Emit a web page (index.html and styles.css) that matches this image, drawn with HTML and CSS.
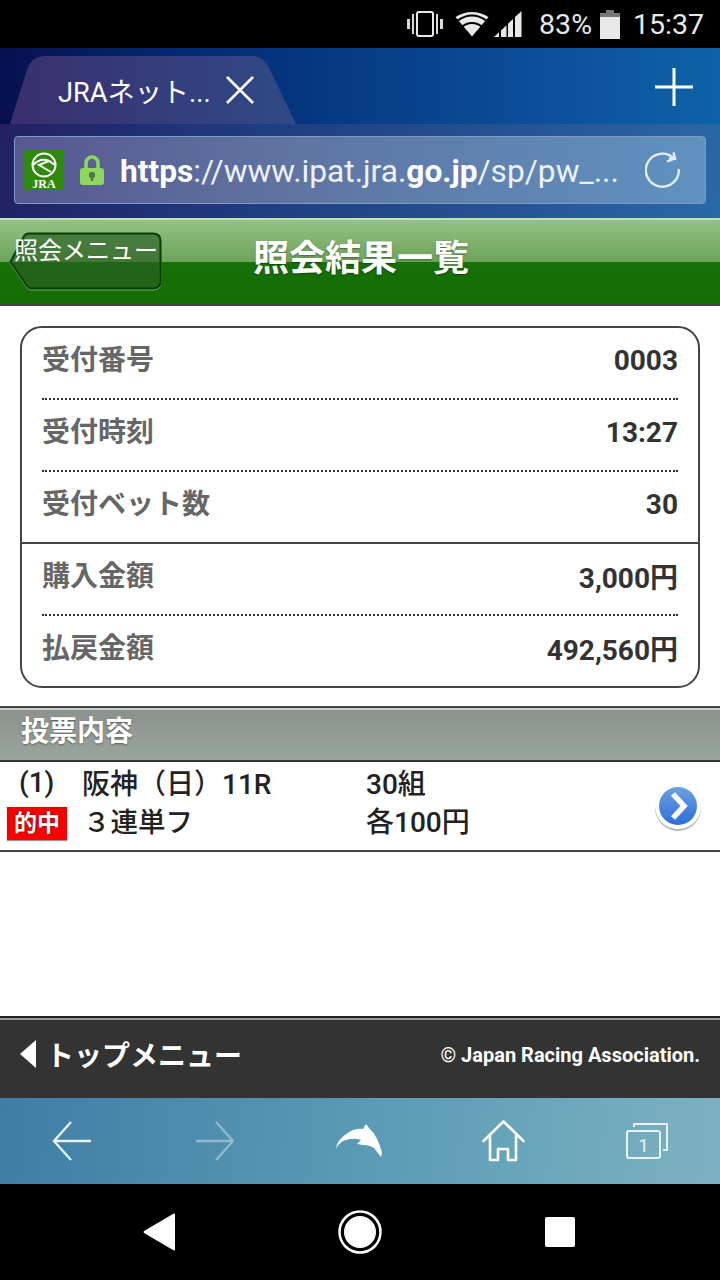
FILE: index.html
```html
<!DOCTYPE html>
<html lang="ja">
<head>
<meta charset="utf-8"/>
<title>照会結果一覧</title>
<link rel="stylesheet" href="styles.css">
</head>
<body>
<div class="phone">

<!-- status bar -->
<div class="status">
  <svg class="st-vib" width="36" height="26" viewBox="0 0 36 26" fill="#d8d8d8">
    <rect x="10" y="1" width="16" height="24" rx="2" fill="none" stroke="#e8e8e8" stroke-width="2"/>
    <path d="M5 3h2v20H5ZM0 8h3v10H0ZM29 3h2v20h-2ZM33 8h3v10h-3Z"/>
  </svg>
  <svg class="st-wifi" width="34" height="26" viewBox="0 0 34 26">
    <path d="M17 25.500 0.500 6Q17 -4 33.500 6Z" fill="#e8e8e8"/>
    <path d="M2 10Q17 -1 32 10M5 17Q17 7 29 17" fill="none" stroke="#000" stroke-width="2"/>
  </svg>
  <svg class="st-signal" width="28" height="26" viewBox="0 0 28 26">
    <path d="M0 26 5 21.300V26ZM7 26V19.400L12.500 14.200V26ZM14 26V12.800L19 8V26ZM21 26V6.100L27.500 0V26Z" fill="#e8e8e8"/>
  </svg>
  <span class="st-pct">83%</span>
  <svg class="st-batt" width="20" height="29" viewBox="0 0 20 29">
    <path d="M6 0h8v3h6v26H0V3h6Z" fill="#e8e8e8"/>
    <path d="M6 0h8v3h6v4H0V3h6Z" fill="#777"/>
  </svg>
  <span class="st-time">15:37</span>
</div>

<!-- browser chrome -->
<div class="chrome">
  <div class="tabs">
    <svg class="tab-shape" width="300" height="68" viewBox="0 0 300 68">
      <defs>
        <linearGradient id="tabg" x1="0" x2="1" y1="0" y2="0">
          <stop offset="0" stop-color="#3a2f6e"/>
          <stop offset="1" stop-color="#2f4a86"/>
        </linearGradient>
      </defs>
      <path d="M10 68 27 14Q31 0 46 0H252Q264 0 270 14L296 68Z" fill="url(#tabg)"/>
    </svg>
    <div class="tab">
      <span class="tab-title">JRAネット...</span>
      <svg width="30" height="30" viewBox="0 0 30 30" stroke="#fff" stroke-width="2.600" fill="none">
        <path d="M2 2 28 28M28 2 2 28"/>
      </svg>
    </div>
    <svg class="tab-add" width="40" height="40" viewBox="0 0 40 40" stroke="#fff" stroke-width="3" fill="none">
      <path d="M20 1V39M1 20H39"/>
    </svg>
  </div>
  <div class="addr-wrap">
    <div class="addr">
      <svg class="jra" width="40" height="40" viewBox="0 0 40 40">
        <rect width="40" height="40" fill="#2f8a0c"/>
        <circle cx="20" cy="15" r="11.500" fill="none" stroke="#fff" stroke-width="2"/>
        <path d="M9 15Q17 7 25 11L15 15 27 22M25 11 31 15" fill="none" stroke="#fff" stroke-width="2"/>
        <text x="20" y="37.500" font-family="Liberation Serif" font-size="12" font-weight="700" fill="#fff" text-anchor="middle">JRA</text>
      </svg>
      <svg class="lock" width="24" height="30" viewBox="0 0 24 30">
        <path d="M6 13V8a6 6 0 0 1 12 0V13" fill="none" stroke="#8ed860" stroke-width="3.600"/>
        <rect y="13" width="24" height="17" rx="3" fill="#8ed860"/>
        <circle cx="12" cy="20" r="3.200" fill="#4d7a4a"/>
        <rect x="10.800" y="21" width="2.400" height="5" fill="#4d7a4a"/>
      </svg>
      <span class="url"><b>https</b>://www.ipat.jra.<b>go.jp</b>/sp/pw_...</span>
      <svg class="reload" width="36" height="38" viewBox="0 0 36 38" fill="none" stroke="#e6edf5" stroke-width="2.400">
        <path d="M33.800 18A16.500 16.500 0 1 1 29 7.500H24"/>
        <path d="M28.500 1.500 30 7.500 22 10.500"/>
      </svg>
    </div>
  </div>
</div>

<!-- page header -->
<header class="head">
  <a class="back">
    <svg class="back-shape" width="154" height="60" viewBox="0 0 154 60">
      <path d="M20 1.500H144Q151.500 1.500 151.500 9V49Q151.500 56.500 144 56.500H22Q20 56.500 18 54L1.500 30 14 6Q16 1.500 20 1.500Z" fill="#003200" fill-opacity=".4" stroke="#0a3c06" stroke-width="2"/>
    </svg>
    <span>照会メニュー</span>
  </a>
  <h1>照会結果一覧</h1>
</header>

<!-- summary -->
<main class="content">
  <section class="card">
    <div class="row dot"><span>受付番号</span><strong>0003</strong></div>
    <div class="row dot"><span>受付時刻</span><strong>13:27</strong></div>
    <div class="row solid"><span>受付ベット数</span><strong>30</strong></div>
    <div class="row dot"><span>購入金額</span><strong>3,000円</strong></div>
    <div class="row last"><span>払戻金額</span><strong>492,560円</strong></div>
  </section>

  <h2 class="sec">投票内容</h2>
  <div class="vote">
    <div class="vote-left">
      <div class="vote-line">
        <span class="c-no">(1)</span>
        <span class="c-race">阪神（日）11R</span>
        <span class="c-num">30組</span>
      </div>
      <div class="vote-line">
        <span class="hit">的中</span>
        <span class="c-type">３連単フ</span>
        <span class="c-num">各100円</span>
      </div>
    </div>
    <svg class="go" width="48" height="50" viewBox="0 0 48 50">
      <defs>
        <linearGradient id="gog" x1="0" x2="0" y1="0" y2="1">
          <stop offset="0" stop-color="#6f9fdc"/>
          <stop offset="1" stop-color="#2a6fdc"/>
        </linearGradient>
      </defs>
      <ellipse cx="24" cy="26" rx="23" ry="23" fill="#bbb"/>
      <circle cx="24" cy="24" r="23" fill="#fff"/>
      <circle cx="24" cy="24" r="19" fill="url(#gog)"/>
      <path d="M19 12 30 24 19 36" fill="none" stroke="#fff" stroke-width="5.500"/>
    </svg>
  </div>
</main>

<!-- site footer -->
<footer class="foot">
  <a class="top"><i class="tri"></i>トップメニュー</a>
  <span class="copy">© Japan Racing Association.</span>
</footer>

<!-- browser toolbar -->
<nav class="tools">
  <svg width="40" height="40" viewBox="0 0 40 40" fill="none" stroke="#e6f2f6" stroke-width="2.400">
    <path d="M39 20H2M19 1 2 20 19 39"/>
  </svg>
  <svg class="t-fwd" width="40" height="40" viewBox="0 0 40 40" fill="none" stroke="#8fb9cc" stroke-width="2.400">
    <path d="M1 20H38M21 1 38 20 21 39"/>
  </svg>
  <svg class="t-dolphin" width="46" height="36" viewBox="0 0 46 36">
    <path d="M0 26Q1 15 17 7 23 5 27 6L30 1 33 5Q42 13 46 30L45 34 38 25Q34 22 27 22L21 21 25 17Q17 14 7 18 2 21 0 26Z" fill="#fff"/>
  </svg>
  <svg class="t-home" width="44" height="42" viewBox="0 0 44 42" fill="none" stroke="#fff" stroke-width="2.600" stroke-linejoin="round" stroke-linecap="round">
    <path d="M1.500 21 21.500 1.500 41.500 21M8 16V40H16V29H26V40H34V16"/>
  </svg>
  <svg class="t-tabs" width="42" height="36" viewBox="0 0 42 36" fill="none" stroke="#e6f2f6" stroke-width="2">
    <rect x="1" y="8" width="33" height="27" rx="2"/>
    <path d="M8 4V1H41V27H37"/>
    <text x="17.500" y="29" font-family="Roboto" font-size="19" fill="#e6f2f6" stroke="none" text-anchor="middle">1</text>
  </svg>
</nav>

<!-- android nav -->
<div class="android">
  <svg width="34" height="38" viewBox="0 0 34 38"><path d="M32 1.500V36.500Q32 38 30 37L1 20Q0 19 1 18L30 1Q32 0 32 1.500Z" fill="#fff"/></svg>
  <svg class="a-home" width="44" height="44" viewBox="0 0 44 44"><circle cx="22" cy="22" r="20.500" fill="none" stroke="#fff" stroke-width="2.500"/><circle cx="22" cy="22" r="16" fill="#fff"/></svg>
  <svg class="a-recent" width="30" height="30" viewBox="0 0 30 30"><rect width="30" height="30" rx="2" fill="#fff"/></svg>
</div>

</div>
</body>
</html>
```

FILE: styles.css
```css
body {
  margin: 0;
  background: #fff;
  font-family: Roboto, "Noto Sans CJK JP", sans-serif;
}
.phone {
  width: 720px;
  height: 1280px;
  display: flex;
  flex-direction: column;
  overflow: hidden;
}

/* status bar */
.status {
  height: 48px;
  background: #000;
  color: #e8e8e8;
  display: flex;
  align-items: center;
  justify-content: flex-end;
  padding-right: 16px;
  font-size: 28.500px;
}
.status svg { flex: none; }
.st-wifi { margin-left: 12px; }
.st-signal { margin-left: 5px; }
.st-pct { margin-left: 17px; }
.st-batt { margin-left: 8px; }
.st-time { margin-left: 13px; }

/* browser chrome */
.chrome {
  height: 170px;
  background: linear-gradient(100deg, #23205f 0%, #1f3a80 35%, #2b68a6 100%);
}
.tabs {
  height: 76px;
  position: relative;
  background: linear-gradient(90deg, #07104f 0%, #022a72 25%, #0b4f98 75%, #0f62a6 100%);
  display: flex;
  align-items: center;
  justify-content: space-between;
}
.tab-shape {
  position: absolute;
  left: 0;
  top: 8px;
}
.tab {
  position: relative;
  display: flex;
  align-items: center;
  gap: 14px;
  margin: 8px 0 0 58px;
  color: #fff;
  font-size: 27.200px;
}
.tab-add { margin: 1px 26px 0 0; }
.addr-wrap { padding: 12px 14px 0; }
.addr {
  height: 66px;
  border: 1px solid #7f9cc6;
  border-radius: 4px;
  background: linear-gradient(90deg, #56588f 0%, #5f74a3 40%, #5f92c0 100%);
  display: flex;
  align-items: center;
  padding-left: 9px;
}
.jra { flex: none; }
.lock { margin-left: 16px; flex: none; }
.url {
  margin-left: 16px;
  color: #eef1f7;
  font-size: 31.700px;
  white-space: nowrap;
  flex: 1;
  padding-top: 2px;
}
.url b { color: #fff; font-weight: 700; }
.reload { margin-right: 24px; flex: none; }

/* header */
.head {
  height: 88px;
  box-sizing: border-box;
  border-top: 2px solid #c4e0b4;
  border-bottom: 2px solid #444;
  background: linear-gradient(#94c283 0%, #6da35a 50%, #167106 50.500%, #166c05 100%);
  position: relative;
  display: flex;
  align-items: center;
  justify-content: center;
  padding-bottom: 14px;
}
.back {
  position: absolute;
  left: 9px;
  top: 12px;
  width: 154px;
  height: 60px;
}
.back-shape {
  position: absolute;
  left: 0;
  top: 0;
  filter: drop-shadow(0 1px 0 #6ea860);
}
.back span {
  position: absolute;
  left: 5px;
  top: 2px;
  color: #fff;
  font-size: 24px;
  line-height: 34px;
  white-space: nowrap;
}
.head h1 {
  margin: 0 0 0 2px;
  color: #fff;
  font-size: 36px;
  font-weight: 700;
  text-shadow: 0 1px 2px rgba(0, 0, 0, .4);
}

/* summary card */
.content {
  flex: 1;
  background: #fff;
  padding-top: 20px;
}
.card {
  margin: 0 20px;
  border: 2px solid #444;
  border-radius: 22px;
}
.row {
  height: 72px;
  box-sizing: border-box;
  margin: 0 20px;
  display: flex;
  align-items: center;
  justify-content: space-between;
  color: #333;
  font-size: 28px;
  font-weight: 700;
  padding-bottom: 6px;
}
.row span { color: #666; padding-bottom: 4px; }
.row strong { font-weight: 700; }
.dot { border-bottom: 2px dotted #333; }
.solid {
  margin: 0;
  padding: 0 20px 6px;
  border-bottom: 2px solid #444;
}
.last { height: 70px; }

/* vote section */
.sec {
  margin: 18px 0 0;
  height: 56px;
  box-sizing: border-box;
  border-top: 2px solid #444;
  border-bottom: 2px solid #333;
  box-shadow: inset 0 2px 0 #c5cfc8;
  background: linear-gradient(#8b918c, #9aa5a0);
  color: #fff;
  font-size: 28px;
  font-weight: 700;
  line-height: 47px;
  padding-left: 21px;
  text-shadow: 0 1px 2px rgba(0, 0, 0, .4);
}
.vote {
  height: 90px;
  box-sizing: border-box;
  border-bottom: 2px solid #444;
  position: relative;
  color: #222;
  font-size: 28px;
  font-weight: 500;
  padding-top: 1px;
}
.vote-line {
  height: 38px;
  display: flex;
  align-items: center;
}
.c-no { margin-left: 19px; width: 63px; }
.c-race { width: 284px; }
.hit {
  margin: 6px 0 0 7px;
  width: 60px;
  height: 33px;
  background: linear-gradient(#f00000, #ff0000);
  border-top: 1px solid #eee;
  box-shadow: 0 1px 1px #999;
  color: #fff;
  font-size: 23px;
  font-weight: 700;
  line-height: 33px;
  text-align: center;
  text-shadow: 0 0 2px #600;
}
.c-type { margin-left: 16px; width: 283px; font-size: 27.500px; }
.go {
  position: absolute;
  right: 18px;
  top: 20px;
}

/* footer */
.foot {
  height: 82px;
  box-sizing: border-box;
  border-top: 2px solid #222;
  box-shadow: inset 0 2px 0 #999;
  background: #333;
  color: #fff;
  display: flex;
  justify-content: space-between;
  align-items: center;
  padding: 0 20px 8px;
}
.top {
  display: flex;
  align-items: center;
  font-size: 28px;
  font-weight: 700;
}
.tri {
  width: 0;
  height: 0;
  border: 14px solid transparent;
  border-left: 0;
  border-right: 16px solid #fff;
  margin-right: 10px;
}
.copy {
  font-size: 20px;
  font-weight: 700;
  padding-top: 2px;
}

/* toolbar */
.tools {
  height: 86px;
  background: linear-gradient(95deg, #3f7da6 0%, #5a9ab5 50%, #7cb2c0 100%);
  display: flex;
  align-items: center;
  padding: 0 0 0 52px;
}
.t-fwd { margin-left: 103px; }
.t-dolphin { margin-left: 101px; }
.t-home { margin-left: 100px; }
.t-tabs { margin-left: 100px; }

/* android nav */
.android {
  height: 96px;
  background: #000;
  display: flex;
  align-items: center;
  padding-left: 143px;
}
.a-home { margin-left: 161px; }
.a-recent { margin-left: 163px; }
```
